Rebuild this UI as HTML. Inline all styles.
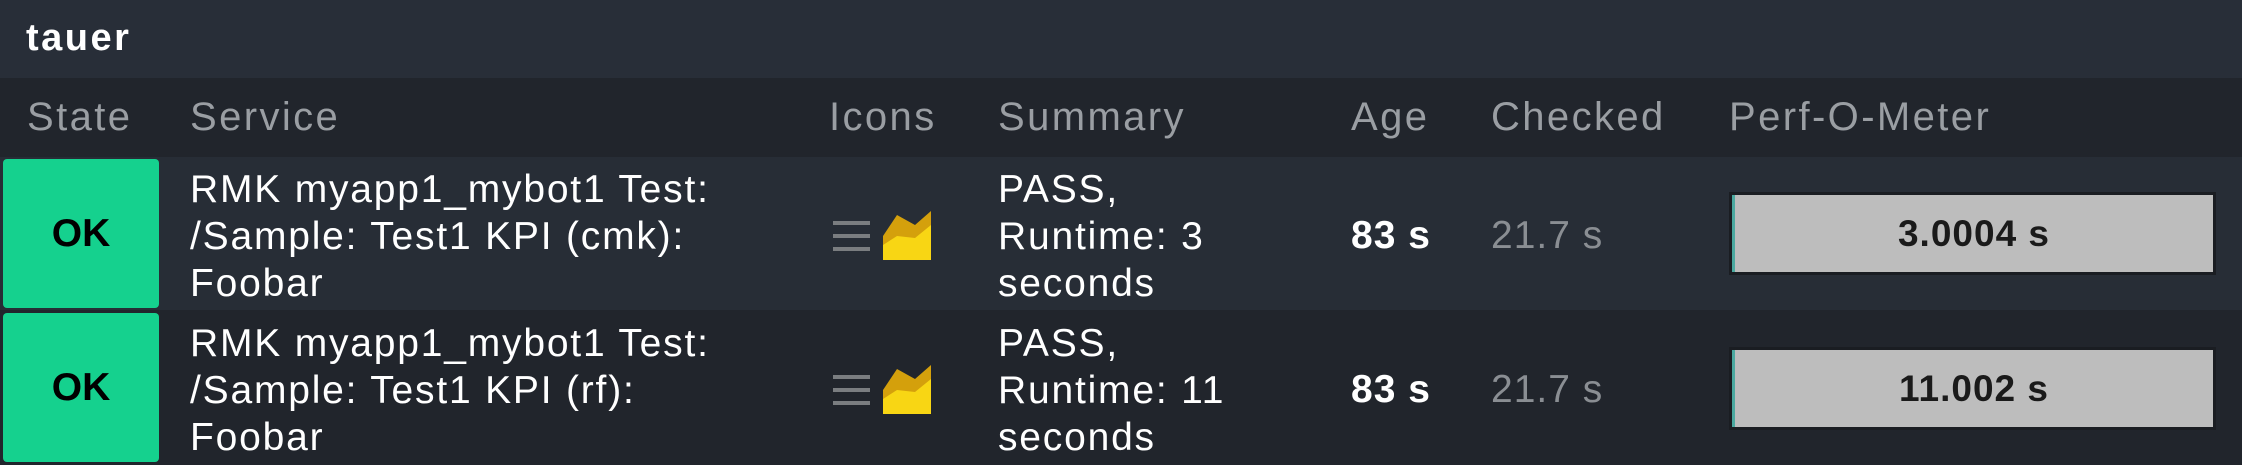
<!DOCTYPE html>
<html><head><meta charset="utf-8"><style>
*{margin:0;padding:0;box-sizing:border-box}
body{width:2242px;height:465px;background:#21252c;font-family:"Liberation Sans",sans-serif;position:relative;overflow:hidden;color:#fff}
.a{position:absolute;white-space:nowrap}
.t{font-size:39px;letter-spacing:1.8px;line-height:47px}
.h{font-size:40px;letter-spacing:2.4px;color:#9a9ea3;top:95px}
.ok{position:absolute;left:3px;width:156px;background:#15d18e;border-radius:4px;color:#000;font-weight:bold;font-size:39px;display:flex;align-items:center;justify-content:center}
.pm{position:absolute;left:1729px;width:487px;background:#1a1d22;padding:3px}
.pm div{height:100%;background:#bdbdbd;border-left:3px solid #4aa9a0;color:#1a1a1a;font-weight:bold;font-size:37px;display:flex;align-items:center;justify-content:center;letter-spacing:1px}
</style></head><body>
<div class="a" style="left:0;top:0;width:2242px;height:78px;background:#282e38"></div>
<div class="a" style="left:26px;top:17px;font-size:38px;font-weight:bold;letter-spacing:2.5px">tauer</div>
<div class="a" style="left:0;top:78px;width:2242px;height:79px;background:#21252c"></div>
<div class="a h" style="left:27px">State</div>
<div class="a h" style="left:190px">Service</div>
<div class="a h" style="left:829px">Icons</div>
<div class="a h" style="left:998px">Summary</div>
<div class="a h" style="left:1351px">Age</div>
<div class="a h" style="left:1491px">Checked</div>
<div class="a h" style="left:1729px">Perf-O-Meter</div>

<div class="a" style="left:0;top:157px;width:2242px;height:153px;background:#272d36"></div>
<div class="a" style="left:0;top:310px;width:2242px;height:155px;background:#21252c"></div>

<div class="ok" style="top:159px;height:149px">OK</div>
<div class="ok" style="top:313px;height:149px">OK</div>

<div class="a t" style="left:190px;top:166px">RMK myapp1_mybot1 Test:<br>/Sample: Test1 KPI (cmk):<br>Foobar</div>
<div class="a t" style="left:190px;top:320px">RMK myapp1_mybot1 Test:<br>/Sample: Test1 KPI (rf):<br>Foobar</div>

<div class="a t" style="left:998px;top:166px">PASS,<br>Runtime: 3<br>seconds</div>
<div class="a t" style="left:998px;top:320px">PASS,<br>Runtime: 11<br>seconds</div>

<svg class="a" style="left:832px;top:209px" width="100" height="52"><rect x="1" y="12" width="37" height="4" fill="#7a7d80"/><rect x="1" y="25" width="37" height="4" fill="#7a7d80"/><rect x="1" y="38" width="37" height="4" fill="#7a7d80"/><g transform="translate(51,1)"><polygon points="0,26 14,5 32,15 48,1 48,50 0,50" fill="#d4a00c"/><polygon points="0,35 14,26 32,28 48,15 48,50 0,50" fill="#f8d614"/></g></svg>
<svg class="a" style="left:832px;top:363px" width="100" height="52"><rect x="1" y="12" width="37" height="4" fill="#7a7d80"/><rect x="1" y="25" width="37" height="4" fill="#7a7d80"/><rect x="1" y="38" width="37" height="4" fill="#7a7d80"/><g transform="translate(51,1)"><polygon points="0,26 14,5 32,15 48,1 48,50 0,50" fill="#d4a00c"/><polygon points="0,35 14,26 32,28 48,15 48,50 0,50" fill="#f8d614"/></g></svg>

<div class="a t" style="left:1351px;top:212px;font-weight:bold;letter-spacing:1px">83 s</div>
<div class="a t" style="left:1351px;top:366px;font-weight:bold;letter-spacing:1px">83 s</div>
<div class="a t" style="left:1491px;top:212px;color:#8a8e93;letter-spacing:1px">21.7 s</div>
<div class="a t" style="left:1491px;top:366px;color:#8a8e93;letter-spacing:1px">21.7 s</div>

<div class="pm" style="top:192px;height:83px"><div>3.0004 s</div></div>
<div class="pm" style="top:347px;height:83px"><div>11.002 s</div></div>
</body></html>
